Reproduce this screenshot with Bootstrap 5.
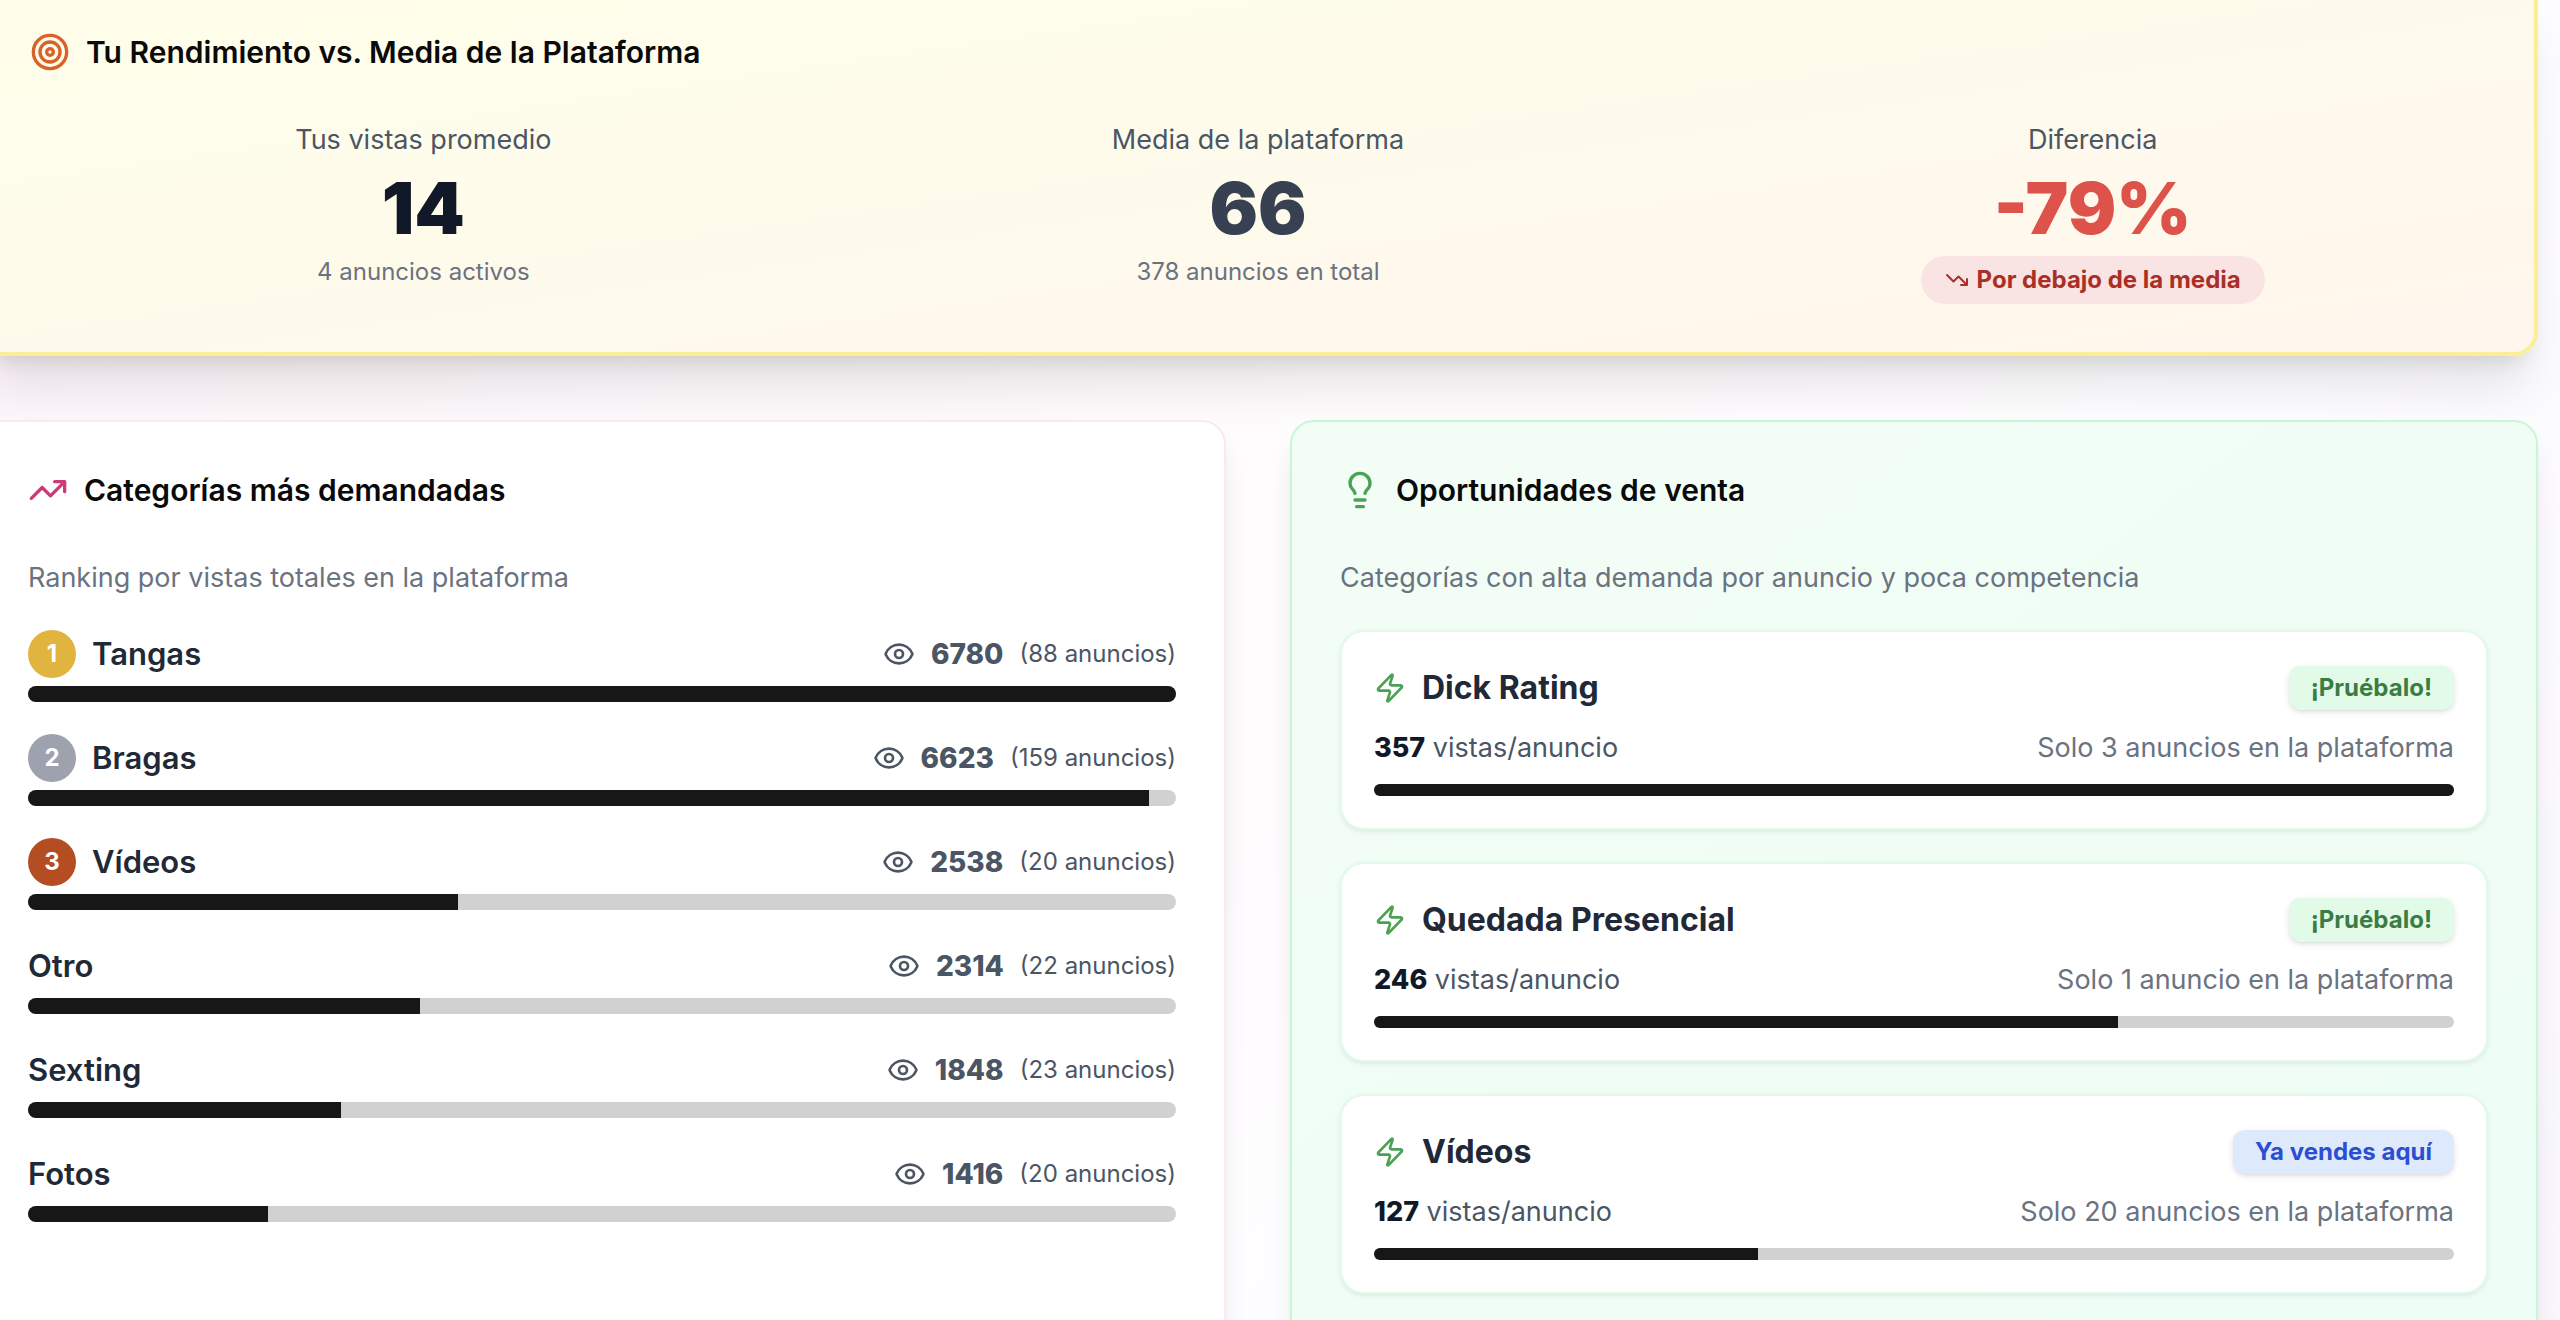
<!DOCTYPE html>
<html lang="es">
<head>
<meta charset="utf-8">
<meta name="viewport" content="width=device-width, initial-scale=1">
<title>Rendimiento y oportunidades</title>
<link href="https://cdn.jsdelivr.net/npm/bootstrap@5.3.0/dist/css/bootstrap.min.css" rel="stylesheet">
<style>
  body { font-family: Inter, "Liberation Sans", sans-serif; font-size: 27px; line-height: 40px; color: #4b5563; height: 100vh; overflow: hidden; background: linear-gradient(135deg, #fdf4f9 0%, #fefcfd 45%, #fefdff 65%, #f9f7fd 100%); }
  .dashboard { margin: -20px 22px 0 -22px; display: grid; gap: 64px; }
  .panels { display: grid; grid-template-columns: 1fr 1fr; gap: 64px; }
  .panel { border-radius: 24px; padding: 48px; border: 2px solid #fbe8f2; background: #fff; box-shadow: 0 20px 30px -6px rgba(0,0,0,.1), 0 8px 12px -8px rgba(0,0,0,.1); }
  .panel-compare { border: 4px solid #fcee95; background: linear-gradient(to bottom right, #fffeea, #fefaec 60%, #fef8ec 85%, #fff6ee); box-shadow: 0 40px 50px -10px rgba(0,0,0,.1), 0 16px 20px -12px rgba(0,0,0,.1); }
  .panel-sales { border-color: #c9f7d5; background: linear-gradient(to bottom right, #f2fdf5, #eefdf5); }
  .panel-title { display: flex; align-items: center; gap: 16px; margin: 0 0 48px; font-size: 30px; line-height: 40px; font-weight: 600; color: #0a0a0a; }
  .compare-grid { display: grid; grid-template-columns: repeat(3, 1fr); gap: 48px; text-align: center; }
  .figure-big { font-size: 72px; line-height: 80px; font-weight: 900; margin: 8px 0; color: #374151; }
  .note { font-size: 24px; line-height: 32px; }
  .soft { color: #6b7280; }
  .pill { display: inline-flex; align-items: center; gap: 8px; padding: 8px 24px; border-radius: 24px; background: #f9e3e3; color: #aa2f26; font-size: 24px; line-height: 32px; font-weight: 700; }
  .rows { display: grid; gap: 32px; margin: 32px 0 0; padding: 0; list-style: none; }
  .row-head { display: flex; align-items: center; justify-content: space-between; height: 48px; }
  .name { font-size: 31px; font-weight: 600; color: #1f2937; }
  .rank { width: 48px; height: 48px; border-radius: 50%; display: flex; align-items: center; justify-content: center; color: #fff; font-size: 24px; font-weight: 700; }
  .rank-gold { background: #e1b43f; } .rank-silver { background: #9da2ae; } .rank-bronze { background: #b54d22; }
  .group { display: flex; align-items: center; gap: 16px; }
  .views { font-size: 28px; font-weight: 800; }
  .progress { --bs-progress-height: 16px; --bs-progress-bg: #d1d1d1; --bs-progress-bar-bg: #171717; --bs-progress-border-radius: 8px; margin-top: 8px; }
  .offer { border: 2px solid #e2faea; border-radius: 24px; background: #fff; padding: 32px; box-shadow: 0 2px 6px rgba(0,0,0,.06), 0 2px 4px -2px rgba(0,0,0,.06); }
  .offer .progress { --bs-progress-height: 12px; margin-top: 16px; }
  .offer .name { font-size: 32px; font-weight: 700; }
  .offer-data { display: flex; justify-content: space-between; margin-top: 16px; }
  .offer-data strong { color: #111827; font-weight: 800; }
  .tag { border-radius: 12px; padding: 6px 22px; font-size: 24px; line-height: 32px; font-weight: 700; box-shadow: 0 2px 6px rgba(0,0,0,.1), 0 2px 4px -2px rgba(0,0,0,.1); }
  .tag-try { background-color: #e2fae8; color: #3a7d44; }
  .tag-own { background-color: #dee9fc; color: #2b4fd2; }
  svg { fill: none; stroke: currentColor; stroke-width: 2; stroke-linecap: round; stroke-linejoin: round; flex: none; }
  .ic-40 { width: 40px; height: 40px; } .ic-32 { width: 32px; height: 32px; } .ic-24 { width: 24px; height: 24px; }
  .c-orange { color: #da6129; } .c-pink { color: #cc3a78; } .c-green { color: #4ca154; } .c-red { color: #de524c; } .c-ink { color: #111827; }
</style>
</head>
<body>
<svg class="d-none">
  <symbol id="eye" viewBox="0 0 24 24"><path d="M2.062 12.348a1 1 0 0 1 0-.696 10.75 10.75 0 0 1 19.876 0 1 1 0 0 1 0 .696 10.75 10.75 0 0 1-19.876 0"/><circle cx="12" cy="12" r="3"/></symbol>
  <symbol id="zap" viewBox="0 0 24 24"><path d="M4 14a1 1 0 0 1-.78-1.63l9.9-10.2a.5.5 0 0 1 .86.46l-1.92 6.02A1 1 0 0 0 13 10h7a1 1 0 0 1 .78 1.63l-9.9 10.2a.5.5 0 0 1-.86-.46l1.92-6.02A1 1 0 0 0 11 14z"/></symbol>
</svg>
<main class="dashboard">
  <section class="panel panel-compare">
    <h2 class="panel-title"><svg class="ic-40 c-orange" viewBox="0 0 24 24"><circle cx="12" cy="12" r="10"/><circle cx="12" cy="12" r="6"/><circle cx="12" cy="12" r="2"/></svg>Tu Rendimiento vs. Media de la Plataforma</h2>
    <div class="compare-grid">
      <div><div>Tus vistas promedio</div><div class="figure-big c-ink">14</div><div class="note soft">4 anuncios activos</div></div>
      <div><div>Media de la plataforma</div><div class="figure-big">66</div><div class="note soft">378 anuncios en total</div></div>
      <div><div>Diferencia</div><div class="figure-big c-red">-79%</div><div class="pill"><svg class="ic-24" viewBox="0 0 24 24"><path d="M22 17l-8.500-8.500-5 5L2 7M16 17h6v-6"/></svg>Por debajo de la media</div></div>
    </div>
  </section>
  <div class="panels">
    <section class="panel">
      <h2 class="panel-title"><svg class="ic-40 c-pink" viewBox="0 0 24 24"><path d="M22 7l-8.500 8.500-5-5L2 17M16 7h6v6"/></svg>Categorías más demandadas</h2>
      <div class="soft">Ranking por vistas totales en la plataforma</div>
      <ol class="rows">
        <li><div class="row-head"><div class="group"><span class="rank rank-gold">1</span><span class="name">Tangas</span></div><div class="group"><svg class="ic-32"><use href="#eye"/></svg><span class="views">6780</span><span class="note">(88 anuncios)</span></div></div><div class="progress"><div class="progress-bar" style="width:100%"></div></div></li>
        <li><div class="row-head"><div class="group"><span class="rank rank-silver">2</span><span class="name">Bragas</span></div><div class="group"><svg class="ic-32"><use href="#eye"/></svg><span class="views">6623</span><span class="note">(159 anuncios)</span></div></div><div class="progress"><div class="progress-bar" style="width:97.68%"></div></div></li>
        <li><div class="row-head"><div class="group"><span class="rank rank-bronze">3</span><span class="name">Vídeos</span></div><div class="group"><svg class="ic-32"><use href="#eye"/></svg><span class="views">2538</span><span class="note">(20 anuncios)</span></div></div><div class="progress"><div class="progress-bar" style="width:37.43%"></div></div></li>
        <li><div class="row-head"><span class="name">Otro</span><div class="group"><svg class="ic-32"><use href="#eye"/></svg><span class="views">2314</span><span class="note">(22 anuncios)</span></div></div><div class="progress"><div class="progress-bar" style="width:34.13%"></div></div></li>
        <li><div class="row-head"><span class="name">Sexting</span><div class="group"><svg class="ic-32"><use href="#eye"/></svg><span class="views">1848</span><span class="note">(23 anuncios)</span></div></div><div class="progress"><div class="progress-bar" style="width:27.26%"></div></div></li>
        <li><div class="row-head"><span class="name">Fotos</span><div class="group"><svg class="ic-32"><use href="#eye"/></svg><span class="views">1416</span><span class="note">(20 anuncios)</span></div></div><div class="progress"><div class="progress-bar" style="width:20.88%"></div></div></li>
      </ol>
    </section>
    <section class="panel panel-sales">
      <h2 class="panel-title"><svg class="ic-40 c-green" viewBox="0 0 24 24"><path d="M15 14c.2-1 .7-1.700 1.500-2.500 1-.9 1.500-2.200 1.500-3.500A6 6 0 0 0 6 8c0 1 .2 2.200 1.500 3.500.7.7 1.300 1.500 1.500 2.500M9 18h6M10 22h4"/></svg>Oportunidades de venta</h2>
      <div class="soft">Categorías con alta demanda por anuncio y poca competencia</div>
      <ul class="rows">
        <li class="offer"><div class="row-head"><div class="group"><svg class="ic-32 c-green"><use href="#zap"/></svg><span class="name">Dick Rating</span></div><span class="tag tag-try">¡Pruébalo!</span></div><div class="offer-data"><span><strong>357</strong> vistas/anuncio</span><span class="soft">Solo 3 anuncios en la plataforma</span></div><div class="progress"><div class="progress-bar" style="width:100%"></div></div></li>
        <li class="offer"><div class="row-head"><div class="group"><svg class="ic-32 c-green"><use href="#zap"/></svg><span class="name">Quedada Presencial</span></div><span class="tag tag-try">¡Pruébalo!</span></div><div class="offer-data"><span><strong>246</strong> vistas/anuncio</span><span class="soft">Solo 1 anuncio en la plataforma</span></div><div class="progress"><div class="progress-bar" style="width:68.9%"></div></div></li>
        <li class="offer"><div class="row-head"><div class="group"><svg class="ic-32 c-green"><use href="#zap"/></svg><span class="name">Vídeos</span></div><span class="tag tag-own">Ya vendes aquí</span></div><div class="offer-data"><span><strong>127</strong> vistas/anuncio</span><span class="soft">Solo 20 anuncios en la plataforma</span></div><div class="progress"><div class="progress-bar" style="width:35.57%"></div></div></li>
      </ul>
    </section>
  </div>
</main>
<script src="https://cdn.jsdelivr.net/npm/bootstrap@5.3.0/dist/js/bootstrap.bundle.min.js"></script>
</body>
</html>
